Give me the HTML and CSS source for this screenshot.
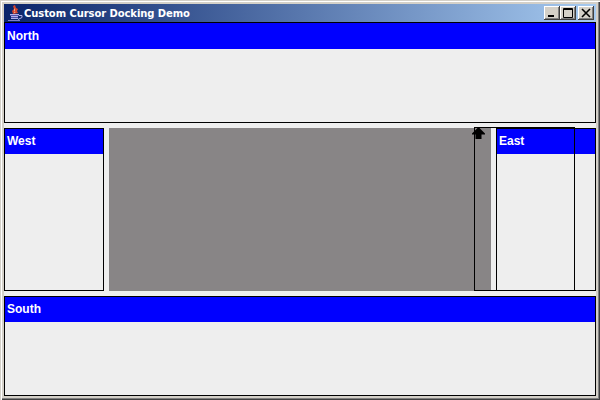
FILE: index.html
```html
<!DOCTYPE html>
<html lang="en">
<head>
    <meta charset="UTF-8">
    <title>Custom Cursor Docking Demo</title>
    <link rel="stylesheet" href="styles.css">
</head>
<body>
    <div class="window">
        <div class="titlebar">
            <svg class="app-icon" width="16" height="17" viewBox="0 0 16 17">
                <path d="M6 1 L8 0 L9 3 L11 4 L10 6 L11 8 L6 9 L5 6 L7 4 Z" fill="#d8452c"/>
                <path d="M7 3 L8 5 L7 7 L9 8 L7 8 Z" fill="#f0c8a0"/>
                <path d="M3 9 H12 V10 H3 Z M4 11 H11 V12 H4 Z M4 13 H11 V14 H4 Z" fill="#b0b0e8"/>
                <path d="M3 10 H12 V11 H3 Z M4 12 H11 V13 H4 Z" fill="#5050a8"/>
                <path d="M12 10.5 H15 V12.5 L11 14.5" fill="none" stroke="#b0b0e8" stroke-width="1"/>
                <path d="M1 15 H13 V16 H1 Z" fill="#8080c8"/>
            </svg>
            <span class="title-text">Custom Cursor Docking Demo</span>
            <div class="window-buttons">
                <div class="win-btn">
                    <svg width="16" height="14" viewBox="0 0 16 14"><path d="M4 9 H10 V11 H4 Z" fill="#000"/></svg>
                </div>
                <div class="win-btn">
                    <svg width="16" height="14" viewBox="0 0 16 14"><path d="M3.5 2.5 H12.5 V11.5 H3.5 Z M3 3.5 H13" fill="none" stroke="#000"/></svg>
                </div>
                <div class="win-btn close">
                    <svg width="16" height="14" viewBox="0 0 16 14"><path d="M4 3 L12 11 M12 3 L4 11" fill="none" stroke="#000" stroke-width="1.6"/></svg>
                </div>
            </div>
        </div>
        <div class="content">
            <section class="panel north">
                <h2 class="panel-head">North</h2>
            </section>
            <div class="middle">
                <section class="panel west">
                    <h2 class="panel-head">West</h2>
                </section>
                <div class="center-gap">
                    <div class="center"></div>
                </div>
                <section class="panel east">
                    <h2 class="panel-head">East</h2>
                </section>
                <div class="drag-outline"></div>
                <svg class="drag-cursor" width="15" height="12" viewBox="0 0 15 12">
                    <path d="M7.5 0 L14 6.5 V7.5 H10.5 V12 H4.5 V7.5 H1 V6.5 Z" fill="#000"/>
                </svg>
            </div>
            <section class="panel south">
                <h2 class="panel-head">South</h2>
            </section>
        </div>
    </div>
</body>
</html>
```

FILE: styles.css
```css
html, body {
    margin: 0;
    padding: 0;
}

body {
    width: 600px;
    height: 400px;
    overflow: hidden;
    background-color: #d4d0c8;
}

.window {
    width: 600px;
    height: 400px;
    box-sizing: border-box;
    padding: 4px;
    display: flex;
    flex-direction: column;
    background-color: #d4d0c8;
    box-shadow: inset 1px 1px 0 #d4d0c8, inset 2px 2px 0 #fff, inset -1px -1px 0 #404040, inset -2px -2px 0 #808080;
}

.titlebar {
    height: 18px;
    flex: none;
    display: flex;
    align-items: center;
    background: linear-gradient(to right, #0a246a, #a6caf0);
    color: white;
}

.app-icon {
    flex: none;
    margin-left: 3px;
    margin-right: 1px;
}

.title-text {
    font-family: "DejaVu Sans", sans-serif;
    font-weight: bold;
    font-size: 10px;
    letter-spacing: -0.08px;
    white-space: nowrap;
    flex: 1;
}

.window-buttons {
    display: flex;
    margin-right: 2px;
}

.win-btn {
    width: 16px;
    height: 14px;
    background-color: #d4d0c8;
    box-shadow: inset -1px -1px 0 #404040, inset 1px 1px 0 #fff, inset -2px -2px 0 #808080;
}

.win-btn svg {
    display: block;
}

.win-btn.close {
    margin-left: 2px;
}

.content {
    flex: 1;
    display: flex;
    flex-direction: column;
    gap: 5px;
    background-color: #eeeeee;
}

.panel {
    box-sizing: border-box;
    border: 1px solid #000;
    background-color: #eeeeee;
}

.panel-head {
    margin: 0;
    height: 25px;
    padding-left: 2px;
    line-height: 25px;
    background-color: #0000ff;
    color: white;
    font-family: "Liberation Sans", Arial, sans-serif;
    font-weight: bold;
    font-size: 12px;
}

.north {
    height: 101px;
    flex: none;
}

.north .panel-head {
    height: 26px;
    line-height: 27px;
}

.south {
    height: 100px;
    flex: none;
}

.middle {
    height: 163px;
    flex: none;
    display: flex;
    position: relative;
    gap: 5px;
}

.west, .east {
    width: 100px;
    flex: none;
}

.center-gap {
    flex: 1;
    display: flex;
    padding-right: 5px;
    margin-right: -5px;
}

.center {
    flex: 1;
    background-color: #888586;
}

.drag-outline {
    position: absolute;
    left: 470px;
    top: -1px;
    width: 99px;
    height: 162px;
    border: 1px solid #000;
}

.drag-cursor {
    position: absolute;
    left: 467px;
    top: -1px;
}
```
